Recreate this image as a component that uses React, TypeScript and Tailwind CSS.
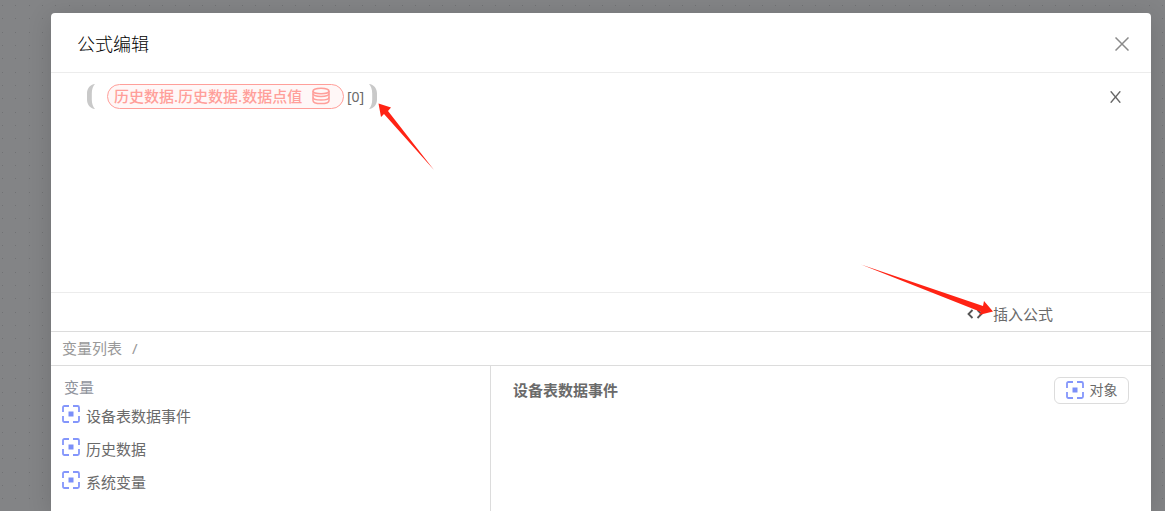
import { useState } from "react";

const VARIABLES = ["设备表数据事件", "历史数据", "系统变量"];

function ObjectIcon() {
  return (
    <svg width="18" height="18" viewBox="0 0 18 18" fill="none" className="shrink-0" aria-hidden="true">
      <path
        d="M1 7V2.5Q1 1 2.5 1H7M11 1H15.5Q17 1 17 2.5V7M17 11V15.5Q17 17 15.5 17H11M7 17H2.5Q1 17 1 15.5V11"
        stroke="#8496fb"
        strokeWidth="1.8"
      />
      <rect x="6.5" y="6.5" width="5" height="5" fill="#7b8ff8" />
    </svg>
  );
}

function DatabaseIcon() {
  return (
    <svg width="18" height="18" viewBox="0 0 18 18" fill="none" stroke="#ff9f9a" strokeWidth="1.5" className="shrink-0" aria-hidden="true">
      <ellipse cx="9" cy="4" rx="8" ry="2.8" />
      <path d="M1 4V6.6C1 10.4 17 10.4 17 6.6V4" />
      <path d="M1 6.6V10.2C1 14 17 14 17 10.2V6.6" />
      <path d="M1 10.2V13.4C1 17.6 17 17.6 17 13.4V10.2" />
    </svg>
  );
}

function Bracket({ flip = false }: { flip?: boolean }) {
  return (
    <svg width="8" height="25" viewBox="0 0 8 25" className={`shrink-0 ${flip ? "-scale-x-100" : ""}`} aria-hidden="true">
      <path d="M8 0C3 0.5 0 4.5 0 9.5V15.5C0 20.5 3 24.5 8 25C6 23 4.8 19.5 4.8 15.5V9.5C4.8 5.5 6 2 8 0Z" fill="#c9c9c9" />
    </svg>
  );
}

// Dotted canvas behind the dialog
function CanvasDots() {
  return (
    <svg className="absolute inset-0 h-full w-full" aria-hidden="true">
      <defs>
        <pattern id="dots" width="40" height="40" patternUnits="userSpaceOnUse">
          {[5, 18, 32].map((y) =>
            [2, 15, 29].map((x) => <rect key={`${x}-${y}`} x={x} y={y} width="1" height="1" fill="#707173" />)
          )}
        </pattern>
      </defs>
      <rect width="100%" height="100%" fill="url(#dots)" />
    </svg>
  );
}

// Red callout arrows laid over the dialog
function Arrows() {
  return (
    <>
      <svg width="56" height="67" viewBox="0 0 56 67" className="pointer-events-none absolute left-[327px] top-[90px]" aria-hidden="true">
        <path d="M0.5 0.5L13 4.5L10 8L56 67L6 11L3 14Z" fill="#ff2314" />
      </svg>
      <svg width="132" height="52" viewBox="0 0 132 52" className="pointer-events-none absolute right-[158px] top-[251px]" aria-hidden="true">
        <path d="M0 0.5L122 42L123 37L132 47.5L118 51L120 48Z" fill="#ff2314" />
      </svg>
    </>
  );
}

export default function App() {
  const [selected, setSelected] = useState(VARIABLES[0]);

  return (
    <div className="relative flex h-screen overflow-hidden bg-[#838486] pl-[51px] pr-3.5 pt-[13px] font-['Noto_Sans','Noto_Sans_CJK_SC',sans-serif] text-[15px] leading-5 text-[#6a6a6a]">
      <CanvasDots />
      <div
        role="dialog"
        aria-labelledby="dialog-title"
        className="relative flex min-w-0 flex-1 flex-col rounded-t bg-white shadow-[0_4px_24px_rgba(0,0,0,0.15)]"
      >
        <header className="flex h-[60px] shrink-0 items-center justify-between border-b border-[#ececec] pl-[26px] pr-[22px]">
          <h1 id="dialog-title" className="font-['Noto_Sans_CJK_SC',sans-serif] text-lg font-light text-black">
            公式编辑
          </h1>
          <button type="button" aria-label="关闭" className="pt-0.5">
            <svg width="14" height="14" viewBox="0 0 14 14" stroke="#8a8a8a" strokeWidth="1.5" aria-hidden="true">
              <path d="M0.5 0.5L13.5 13.5M13.5 0.5L0.5 13.5" />
            </svg>
          </button>
        </header>

        <section className="flex h-[220px] shrink-0 items-start justify-between border-b border-[#ececec] pl-9 pr-[30px] pt-[11px]">
          <div className="flex items-center">
            <Bracket />
            <span className="ml-3 flex h-[25px] w-[237px] items-center justify-between rounded-full border border-[#ff9f9a] bg-[#fff7f7] pb-0.5 pl-1.5 pr-[13px] font-medium text-[#ff9f9a]">
              历史数据.历史数据.数据点值
              <DatabaseIcon />
            </span>
            <span className="ml-[3px] mr-[5px] text-sm">[0]</span>
            <Bracket flip />
          </div>
          <button type="button" aria-label="清除" className="flex h-[25px] items-center">
            <svg width="11" height="12" viewBox="0 0 11 12" stroke="#666" strokeWidth="1.4" fill="none" aria-hidden="true">
              <path d="M0.7 0.3L10.3 11.7M10.3 0.3L0.7 11.7" />
            </svg>
          </button>
        </section>

        <div className="flex h-[39px] shrink-0 items-center justify-end border-b border-[#dcdcdc] pr-[98px]">
          <button type="button" className="flex items-center gap-2.5 pt-1">
            <svg width="16" height="10" viewBox="0 0 16 10" stroke="#555" strokeWidth="1.8" fill="none" aria-hidden="true">
              <path d="M5.5 1L1.5 5L5.5 9M10.5 1L14.5 5L10.5 9" />
            </svg>
            插入公式
          </button>
        </div>

        <nav className="flex h-[34px] shrink-0 items-center gap-2.5 border-b border-[#dcdcdc] pb-0.5 pl-[11px] text-[#999]">
          <span>变量列表</span>
          <span>/</span>
        </nav>

        <div className="flex min-h-0 flex-1">
          <aside className="w-2/5 border-r border-[#dcdcdc] pl-[11px] pt-[11px]">
            <h2 className="pl-0.5 text-[#8f939c]">变量</h2>
            <ul>
              {VARIABLES.map((name) => (
                <li key={name}>
                  <button type="button" onClick={() => setSelected(name)} className="flex h-[33px] items-center gap-1.5">
                    <ObjectIcon />
                    <span className="pt-1">{name}</span>
                  </button>
                </li>
              ))}
            </ul>
          </aside>
          <main className="flex flex-1 items-start justify-between pl-[22px] pr-[22px] pt-[11px]">
            <h2 className="pt-[3px] font-bold">{selected}</h2>
            <button type="button" className="flex h-[27px] w-[75px] items-center justify-center gap-1.5 rounded-md border border-[#dcdcdc] pb-0.5 text-sm">
              <ObjectIcon />
              对象
            </button>
          </main>
        </div>

        <Arrows />
      </div>
    </div>
  );
}
